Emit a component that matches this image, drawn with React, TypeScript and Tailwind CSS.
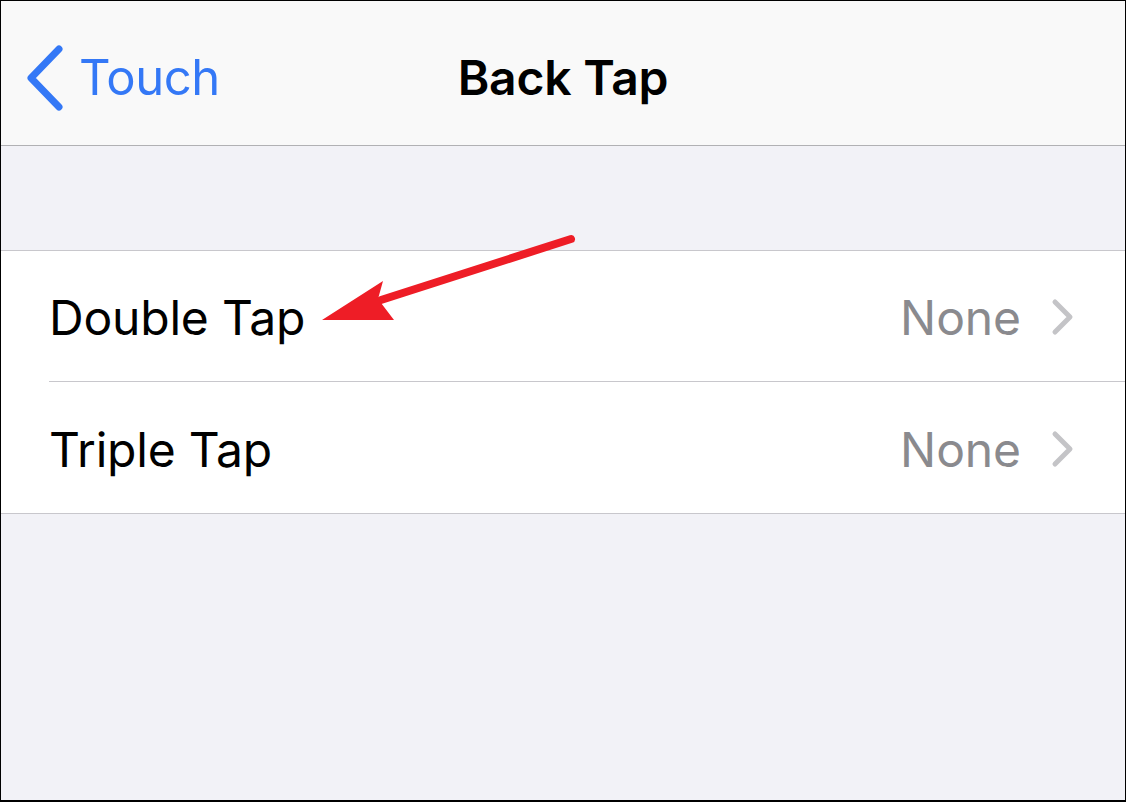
import React from 'react'

const font = { fontFamily: 'Inter, "Noto Sans", sans-serif' }

const Chevron: React.FC<{ className?: string }> = ({ className }) => (
  <svg viewBox="0 0 40 68" className={className} fill="none">
    <path d="M34 5 L6 34 L34 63" stroke="currentColor" strokeWidth="7" strokeLinecap="round" strokeLinejoin="round" />
  </svg>
)

const Row: React.FC<{ label: string; last?: boolean }> = ({ label, last }) => (
  <div className="pl-[48px] bg-white">
    <div className={`h-[131px] flex items-center pr-[50px] ${last ? '' : 'border-b border-[#c8c7cc]'}`}>
      <span className="flex-1 text-[48px] text-black tracking-[-0.2px] pt-[4px]">{label}</span>
      <span className="text-[48px] text-[#8a8a8e] tracking-[-0.1px] pt-[4px]">None</span>
      <svg viewBox="0 0 24 38" className="w-[24px] h-[38px] ml-[30px] mt-[2px]" fill="none">
        <path d="M4 4 L19 19 L4 34" stroke="#c4c4c7" strokeWidth="5" strokeLinecap="round" strokeLinejoin="round" />
      </svg>
    </div>
  </div>
)

export default function App() {
  return (
    <div
      className="relative w-[1126px] h-[802px] box-border border-l border-t border-r border-b-2 border-black bg-[#f2f2f7] overflow-hidden flex flex-col"
      style={font}
    >
      <div className="h-[145px] shrink-0 bg-[#f9f9f9] border-b border-[#b1b1b4] relative flex items-center justify-center pt-[10px]">
        <div className="absolute left-[24px] top-0 h-full pt-[10px] flex items-center text-[#3478f6]">
          <Chevron className="w-[40px] h-[68px]" />
          <span className="ml-[14px] text-[49px] tracking-[-0.5px]">Touch</span>
        </div>
        <span className="text-[48px] font-semibold text-black tracking-[-0.2px]">Back Tap</span>
      </div>

      <div className="h-[104px] shrink-0" />

      <div className="border-t border-b border-[#c8c7cc]">
        <Row label="Double Tap" />
        <Row label="Triple Tap" last />
      </div>

      <svg className="absolute left-0 top-0 pointer-events-none" width="1126" height="802" viewBox="0 0 1126 802">
        <line x1="570" y1="238" x2="380" y2="299" stroke="#ee1d26" strokeWidth="8" strokeLinecap="round" />
        <polygon points="321,319 382,280 377,298 393,319" fill="#ee1d26" />
      </svg>
    </div>
  )
}
